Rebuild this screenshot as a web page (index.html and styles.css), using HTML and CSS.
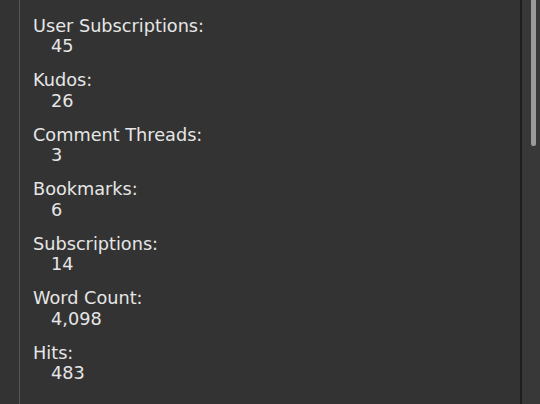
FILE: index.html
```html
<!DOCTYPE html>
<html>
<head>
<meta charset="utf-8">
<link rel="stylesheet" href="styles.css">
</head>
<body>
<div class="frame">
  <div class="gutter"></div>
  <div class="panel">
    <dl class="stats">
      <div class="stat"><dt>User Subscriptions:</dt><dd>45</dd></div>
      <div class="stat"><dt>Kudos:</dt><dd>26</dd></div>
      <div class="stat"><dt>Comment Threads:</dt><dd>3</dd></div>
      <div class="stat"><dt>Bookmarks:</dt><dd>6</dd></div>
      <div class="stat"><dt>Subscriptions:</dt><dd>14</dd></div>
      <div class="stat"><dt>Word Count:</dt><dd>4,098</dd></div>
      <div class="stat"><dt>Hits:</dt><dd>483</dd></div>
    </dl>
  </div>
  <div class="scrollbar"><div class="thumb"></div></div>
</div>
</body>
</html>
```
FILE: styles.css
```css
html, body {
  margin: 0;
  padding: 0;
  height: 100%;
  background: #333333;
}
.frame {
  display: flex;
  width: 540px;
  height: 404px;
  overflow: hidden;
}
.gutter {
  width: 19px;
  flex: none;
  border-right: 1px solid #555555;
}
.panel {
  flex: 1;
  border-right: 2px solid #1e1e1e;
  padding: 15.5px 0 0 13px;
}
.stats {
  margin: 0;
  display: flex;
  flex-direction: column;
  gap: 13.5px;
  font-family: "DejaVu Sans", Verdana, sans-serif;
  font-size: 17.7px;
  line-height: 20.5px;
  color: #e6e6e6;
}
.stat dt, .stat dd {
  margin: 0;
}
.stat dd {
  padding-left: 18px;
}
.scrollbar {
  width: 18px;
  flex: none;
  background: #383838;
  position: relative;
}
.thumb {
  position: absolute;
  left: 9px;
  top: 0;
  width: 5px;
  height: 146px;
  background: #9a9a9a;
  border-radius: 0 0 2px 2px;
}
```
